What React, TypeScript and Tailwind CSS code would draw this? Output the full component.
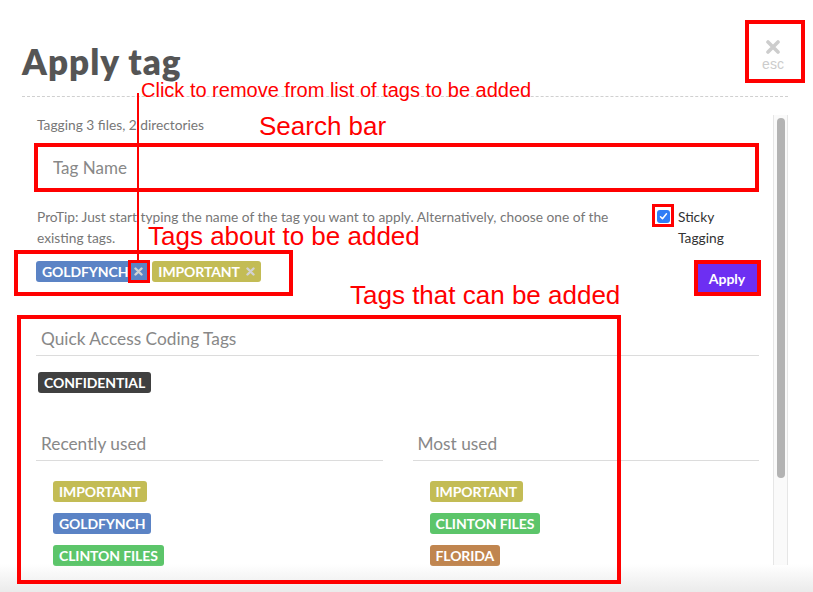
import React from 'react';

type TagProps = { label: string; color: string; removable?: boolean };

const TAG_COLORS: Record<string, string> = {
  GOLDFYNCH: 'bg-[#5b83c5]',
  IMPORTANT: 'bg-[#c3bc55]',
  'CLINTON FILES': 'bg-[#5cc56a]',
  FLORIDA: 'bg-[#c0854f]',
  CONFIDENTIAL: 'bg-[#404040]',
};

const SmallX = () => (
  <svg width="9" height="9" viewBox="0 0 9 9" className="ml-[6px]">
    <path d="M1.5 1.5l6 6M7.5 1.5l-6 6" stroke="#d2d2d2" strokeWidth="2.4" strokeLinecap="round" />
  </svg>
);

const Tag = ({ label, color, removable }: TagProps) => (
  <span
    className={`inline-flex h-[21px] items-center rounded-[3px] px-[6px] text-[14px] font-bold leading-none tracking-[-0.1px] text-white ${color}`}
  >
    {label}
    {removable && <SmallX />}
  </span>
);

const SectionHeader = ({ children }: { children: React.ReactNode }) => (
  <div className="h-[34px] border-b border-[#dcdcdc] pl-[5px] text-[17.3px] leading-[33px] text-[#888]">{children}</div>
);

const TagList = ({ tags }: { tags: string[] }) => (
  <div className="mt-[20px] flex flex-col items-start gap-[11px] pl-[17px]">
    {tags.map((t) => (
      <Tag key={t} label={t} color={TAG_COLORS[t]} />
    ))}
  </div>
);

export default function App() {
  return (
    <div className="relative h-[592px] w-[813px] overflow-hidden bg-white font-['Lato',sans-serif]">
      {/* Header */}
      <div className="flex items-start justify-between pl-[22px] pr-[28px] pt-[40px]">
        <h1 className="mt-[4px] text-[35px] font-extrabold leading-none tracking-[1px] text-[#555]">Apply tag</h1>
        <button className="flex w-[24px] flex-col items-center font-['Liberation_Sans',sans-serif] text-[14px] leading-none text-[#ccc]">
          <svg width="14" height="14" viewBox="0 0 14 14">
            <path d="M2 2l10 10M12 2L2 12" stroke="#cdcdcd" strokeWidth="3.6" strokeLinecap="round" />
          </svg>
          <span className="mt-[3px]">esc</span>
        </button>
      </div>
      <div className="ml-[22px] mt-[17px] w-[766px] border-b border-dashed border-[#d0d0d0]" />

      {/* Body */}
      <div className="flex pl-[36px] pt-[18px]">
        <div className="w-[723px]">
          <div className="pl-[1px] text-[13.75px] leading-[20px] text-[#777]">Tagging 3 files, 2 directories</div>
          <input
            placeholder="Tag Name"
            className="mt-[10px] h-[45px] w-full border border-[#ddd] px-[16px] text-[17px] text-[#555] outline-none placeholder:text-[#888]"
          />
          <div className="mt-[16px] flex items-start justify-between">
            <p className="w-[590px] pl-[1px] text-[13.75px] leading-[21px] text-[#777]">
              ProTip: Just start typing the name of the tag you want to apply. Alternatively, choose one of the existing tags.
            </p>
            <label className="flex w-[102px] items-start gap-[8px] text-[13.75px] leading-[21px] text-[#333]">
              <span className="mt-[4px] flex h-[13px] w-[13px] shrink-0 items-center justify-center rounded-[3px] bg-[#2f7df6]">
                <svg width="9" height="9" viewBox="0 0 9 9">
                  <path d="M1.5 4.8l2 2 4-5" stroke="white" strokeWidth="1.5" fill="none" strokeLinecap="round" strokeLinejoin="round" />
                </svg>
              </span>
              <span>
                Sticky
                <br />
                Tagging
              </span>
            </label>
          </div>
          <div className="mt-[13px] flex items-start justify-between">
            <div className="flex gap-[3px]">
              <Tag label="GOLDFYNCH" color={TAG_COLORS.GOLDFYNCH} removable />
              <Tag label="IMPORTANT" color={TAG_COLORS.IMPORTANT} removable />
            </div>
            <button className="mr-[1px] mt-[1px] h-[32px] w-[62px] bg-[#6d2ff2] text-[14px] font-bold text-white">Apply</button>
          </div>

          {/* Tags that can be added */}
          <div className="mt-[28px]">
            <SectionHeader>Quick Access Coding Tags</SectionHeader>
            <div className="mt-[16px] flex pl-[2px]">
              <Tag label="CONFIDENTIAL" color={TAG_COLORS.CONFIDENTIAL} />
            </div>
            <div className="mt-[34px] grid grid-cols-2 gap-[30px]">
              <div>
                <SectionHeader>Recently used</SectionHeader>
                <TagList tags={['IMPORTANT', 'GOLDFYNCH', 'CLINTON FILES']} />
              </div>
              <div>
                <SectionHeader>Most used</SectionHeader>
                <TagList tags={['IMPORTANT', 'CLINTON FILES', 'FLORIDA']} />
              </div>
            </div>
          </div>
        </div>

        {/* Scrollbar */}
        <div className="ml-[14px] h-[450px] w-[15px] border-x border-[#e6e6e6] bg-[#fafafa] pl-[3px] pt-[3px]">
          <div className="h-[360px] w-[8px] rounded-full bg-[#b3b3b3]" />
        </div>
      </div>

      {/* Bottom shade */}
      <div className="pointer-events-none absolute bottom-0 left-0 right-0 h-[28px] bg-linear-to-b from-white/0 to-[#ebebeb]" />

      {/* Annotations */}
      <div className="pointer-events-none absolute inset-0 font-['Liberation_Sans',Arial,sans-serif] leading-none text-[#ff0000]">
        <div className="absolute left-[745px] top-[20px] h-[63px] w-[60px] border-4 border-[#ff0000]" />
        <div className="absolute left-[141px] top-[80px] text-[20px]">Click to remove from list of tags to be added</div>
        <div className="absolute left-[137px] top-[93px] h-[168px] w-[2px] bg-[#ff0000]" />
        <div className="absolute left-[259px] top-[113px] text-[26px]">Search bar</div>
        <div className="absolute left-[34px] top-[143px] h-[49px] w-[725px] border-4 border-[#ff0000]" />
        <div className="absolute left-[652px] top-[204px] h-[23px] w-[22px] border-[3px] border-[#ff0000]" />
        <div className="absolute left-[148px] top-[223px] text-[26px]">Tags about to be added</div>
        <div className="absolute left-[14px] top-[250px] h-[46px] w-[279px] border-4 border-[#ff0000]" />
        <div className="absolute left-[128px] top-[260px] h-[23px] w-[22px] border-[3px] border-[#ff0000]" />
        <div className="absolute left-[694px] top-[260px] h-[36px] w-[67px] border-4 border-[#ff0000]" />
        <div className="absolute left-[350px] top-[282px] text-[26px]">Tags that can be added</div>
        <div className="absolute left-[17px] top-[315px] h-[269px] w-[604px] border-4 border-[#ff0000]" />
      </div>
    </div>
  );
}
